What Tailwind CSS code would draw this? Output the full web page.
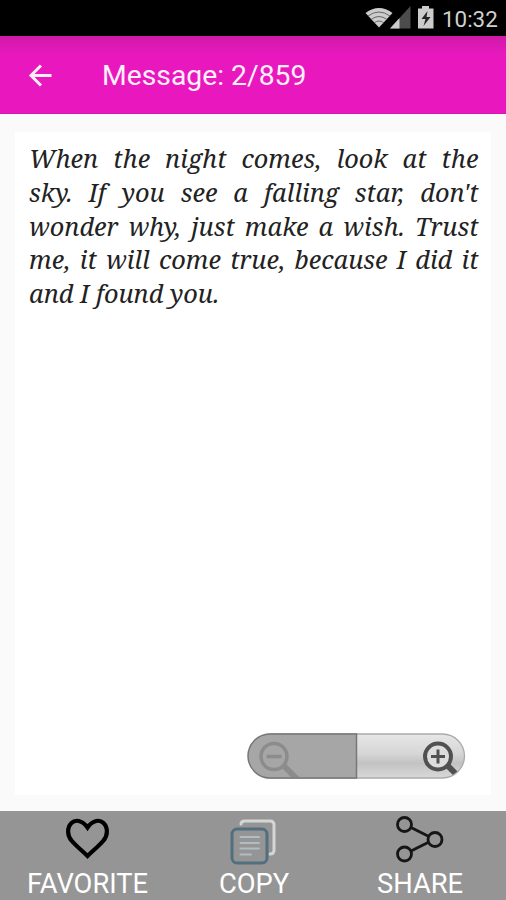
<!DOCTYPE html>
<html lang="en">
<head>
<meta charset="utf-8">
<title>Message</title>
<script src="https://cdn.jsdelivr.net/npm/@tailwindcss/browser@4"></script>
</head>
<body class="flex h-[900px] w-[506px] flex-col overflow-hidden bg-[#fafafa] font-['Roboto',sans-serif]">
  <div class="flex h-9 shrink-0 items-center justify-end bg-black pr-2 text-[#d0d0d0]">
    <svg class="h-9 w-[76px]" viewBox="0 0 76 36">
      <path d="M.5 13Q14 3 27.500 13L14 27.500Z" fill="#ccc"/>
      <path d="M3 16q11-8 22 0M6 19.500q8-6 16 0M9 23q5-4 10 0" fill="none" stroke="#666" stroke-width="1"/>
      <path d="M25 28.500 45.500 6v22.500Z" fill="#4c4c4c"/>
      <path d="M25 28.500 34.500 18v10.500Z" fill="#ccc"/>
      <path d="M53 8.500h4V6h7v2.500h4.500v20H53Z" fill="#ccc"/>
      <path d="m62.500 11-6 8h4L58.500 26l7-9h-4Z" fill="#222"/>
    </svg>
    <span class="ml-[1px] w-[56px] pt-px text-[22.400px] leading-9">10:32</span>
  </div>
  <header class="flex h-[78px] shrink-0 items-center border-b border-[#d916ae] bg-linear-to-b from-[#cf1aa9] via-[#e918be] via-25% to-[#e918be] text-[#fff0fc]">
    <svg class="ml-7 size-6" viewBox="0 0 24 24" fill="none" stroke="currentColor" stroke-width="3"><path d="M23.500 12.500H3M13 2.500 3 12.500 13 22.500"/></svg>
    <h1 class="ml-[50px] pt-[3px] text-[28.300px] leading-8">Message: 2/859</h1>
  </header>
  <main class="mx-[15px] mt-[18px] flex h-[663px] shrink-0 flex-col justify-between bg-white">
    <div class="ml-[14px] mt-[10px] w-[449.500px] font-['Noto_Serif','Liberation_Serif',serif] text-[25.300px] italic leading-[33.800px] text-[#222]">
      <p class="[text-align-last:justify]">When the night comes, look at the</p>
      <p class="[text-align-last:justify]">sky. If you see a falling star, don't</p>
      <p class="[text-align-last:justify]">wonder why, just make a wish. Trust</p>
      <p class="[text-align-last:justify]">me, it will come true, because I did it</p>
      <p><span>and I found you.</span></p>
    </div>
    <svg class="mb-[15px] ml-[232px] h-[48px] w-[219px]" viewBox="0 0 219 48">
      <defs>
        <linearGradient id="metal" x2="0" y2="1"><stop stop-color="#e8e8e8"/><stop offset=".45" stop-color="#d6d6d6"/><stop offset=".65" stop-color="#c2c2c2"/><stop offset="1" stop-color="#dcdcdc"/></linearGradient>
        <clipPath id="pill"><rect x="1.500" y="2" width="216" height="44" rx="22"/></clipPath>
      </defs>
      <g clip-path="url(#pill)">
        <path fill="#a6a6a6" d="M0 0h109v48H0z"/><path fill="url(#metal)" d="M109 0h110v48H109z"/>
        <g fill="none" stroke="#8c8c8c" stroke-width="3.500"><circle cx="27" cy="24.500" r="13"/><path d="M19.500 24.500h15"/><path stroke-width="6" d="m37 34 14 14"/></g>
        <g fill="none" stroke="#505050" stroke-width="4"><circle cx="191" cy="24.500" r="13" fill="#dcdcdc"/><path stroke-width="3" d="M184 24.500h14M191 17.500v14"/><path stroke-width="6" d="m201 34 9 9"/></g>
      </g>
      <rect x="1.500" y="2" width="216" height="44" rx="22" fill="none" stroke="#aaa" stroke-width="1.300"/>
      <path d="M109.500 2H23a22 22 0 0 0 0 44h86.500Z" fill="none" stroke="#777" stroke-width="1.500"/>
    </svg>
  </main>
  <nav class="mt-auto grid h-[89px] shrink-0 grid-cols-[175px_158px_174px] bg-[#959595] text-[27.300px] leading-8 text-white">
    <div class="flex flex-col items-center">
      <svg class="h-[57px] w-12" viewBox="0 0 48 57" fill="none" stroke="#000" stroke-width="4.200"><path d="M23.500 16.500C18 8.500 11 8.500 7.500 12C2.500 17 3.500 25 7.500 29.500C12 35 18 39.500 23.500 45C29 39.500 35 35 39.500 29.500C43.500 25 44.500 17 39.500 12C36 8.500 29 8.500 23.500 16.500Z"/></svg>
      <span>FAVORITE</span>
    </div>
    <div class="flex flex-col items-center">
      <svg class="h-[57px] w-12" viewBox="0 0 48 57" fill="none" stroke-linecap="round"><path d="M11 13q0-3 4-3h25q4 0 4 4v25q0 4-4 4" stroke="#d5d5d5" stroke-width="3"/><rect x="2" y="18" width="35" height="34" rx="5" stroke="#526f80" stroke-width="3"/><path d="M10.500 26H29M10.500 32H29M10.500 37.500H29M10.500 43.500H21" stroke="#b1bcc4" stroke-width="2"/></svg>
      <span>COPY</span>
    </div>
    <div class="flex flex-col items-center">
      <svg class="h-[57px] w-12" viewBox="0 0 48 57" fill="none" stroke="#151515" stroke-width="2.800"><circle cx="8.500" cy="13.500" r="7"/><circle cx="8.500" cy="43" r="7"/><circle cx="39" cy="28.500" r="7"/><path d="m15 16.500 18 9M15 40l18-9"/></svg>
      <span>SHARE</span>
    </div>
  </nav>
</body>
</html>
